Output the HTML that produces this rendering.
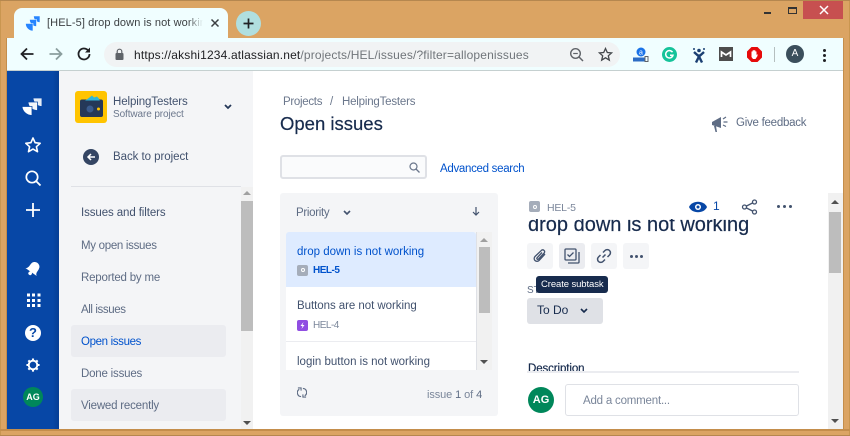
<!DOCTYPE html>
<html><head><meta charset="utf-8">
<style>
html,body{margin:0;padding:0}
body{width:850px;height:436px;overflow:hidden;position:relative;background:#DBA463;font-family:"Liberation Sans",sans-serif;color:#42526E}
div,span,svg{position:absolute}
.t{white-space:nowrap;font-size:11.5px;line-height:16px;letter-spacing:-.3px}
</style></head><body>
<div style="left:0;top:0;width:850px;height:1px;background:#B5874F"></div>
<div style="left:0;top:1px;width:1px;height:435px;background:#C99650"></div>
<div style="left:849px;top:1px;width:1px;height:435px;background:#C99650"></div>
<div style="left:0;top:435px;width:850px;height:1px;background:#B5874F"></div>
<!-- tab -->
<div style="left:14px;top:8px;width:214px;height:31px;background:#F0FEFF;border-radius:8px 8px 0 0"></div>
<svg style="left:25px;top:15px" width="16" height="17" viewBox="0 0 16 17"><g fill="#2684FF" stroke="#F0FEFF" stroke-width=".6"><path d="M8.500 1h6.500v6.500a6.500 6.500 0 0 1-6.500-6.500z"/><path d="M4.500 4.500h7v7a7 7 0 0 1-7-7z"/><path d="M.5 8.500h7.500v7.500a7.500 7.500 0 0 1-7.500-7.500z"/></g></svg>
<div class="t" style="left:47px;top:15px;width:156px;overflow:hidden;color:#3C4043;font-size:11px;letter-spacing:.1px">[HEL-5] drop down is not working</div>
<div style="left:188px;top:14px;width:15px;height:18px;background:linear-gradient(90deg,rgba(240,254,255,0),#F0FEFF)"></div>
<svg style="left:210px;top:18px" width="10" height="10" viewBox="0 0 10 10"><path d="M1.500 1.500l7 7M8.500 1.500l-7 7" stroke="#3C4043" stroke-width="1.500"/></svg>
<div style="left:236px;top:11px;width:25px;height:25px;border-radius:50%;background:#B0DFDF"></div>
<svg style="left:242px;top:17px" width="13" height="13" viewBox="0 0 13 13"><path d="M6.500 1.500v10M1.500 6.500h10" stroke="#202124" stroke-width="1.700"/></svg>
<!-- window controls -->
<div style="left:764px;top:12px;width:7px;height:2px;background:#333"></div>
<div style="left:788px;top:7px;width:7px;height:4px;border:1.500px solid #333;border-top-width:2px"></div>
<div style="left:803px;top:1px;width:40px;height:18px;background:#C75050"></div>
<svg style="left:819px;top:5px" width="10" height="10" viewBox="0 0 10 10"><path d="M1 1l8 8M9 1l-8 8" stroke="#fff" stroke-width="1.500"/></svg>
<!-- toolbar -->
<div style="left:7px;top:38px;width:836px;height:32px;background:#F0FEFF"></div>
<div style="left:7px;top:70px;width:836px;height:1px;background:#C5D0D0"></div>
<svg style="left:19px;top:46px" width="16" height="16" viewBox="0 0 16 16"><path d="M14.500 8H2.500M8 2.500L2.500 8 8 13.500" fill="none" stroke="#202124" stroke-width="1.800"/></svg>
<svg style="left:48px;top:46px" width="16" height="16" viewBox="0 0 16 16"><path d="M1.500 8h12M8 2.500L13.500 8 8 13.500" fill="none" stroke="#8A9E9E" stroke-width="1.800"/></svg>
<svg style="left:76px;top:46px" width="16" height="16" viewBox="0 0 16 16"><path d="M13.500 8A5.500 5.500 0 1 1 11.800 4" fill="none" stroke="#202124" stroke-width="1.800"/><path d="M14 1.500V6.500H9z" fill="#202124"/></svg>
<div style="left:104px;top:42px;width:516px;height:25px;border-radius:13px;background:#F1F3F4"></div>
<svg style="left:114px;top:48px" width="11" height="13" viewBox="0 0 11 13"><rect x="1.500" y="5" width="8" height="7" rx="1" fill="#5F6368"/><path d="M3.200 5V3.500a2.300 2.300 0 0 1 4.600 0V5" fill="none" stroke="#5F6368" stroke-width="1.200"/></svg>
<div class="t" style="left:134px;top:47px;font-size:12px;color:#70757A;letter-spacing:.16px"><span style="position:static;color:#202124">https://akshi1234.atlassian.net</span>/projects/HEL/issues/?filter=allopenissues</div>
<svg style="left:569px;top:47px" width="15" height="15" viewBox="0 0 15 15"><circle cx="6.500" cy="6.500" r="4.800" fill="none" stroke="#5F6368" stroke-width="1.400"/><path d="M10 10l4 4" stroke="#5F6368" stroke-width="1.500"/><path d="M4.200 6.500h4.600" stroke="#5F6368" stroke-width="1.200"/></svg>
<svg style="left:598px;top:47px" width="15" height="15" viewBox="0 0 15 15"><path d="M7.500 1.500l1.800 4 4.300.4-3.300 2.900 1 4.300-3.800-2.300-3.800 2.300 1-4.300L1.400 5.900l4.300-.4z" fill="none" stroke="#44484C" stroke-width="1.300"/></svg>
<!-- extensions -->
<svg style="left:633px;top:47px" width="16" height="16" viewBox="0 0 16 16"><circle cx="8" cy="5" r="4.500" fill="#1A73E8"/><text x="8" y="7.500" font-size="7" text-anchor="middle" fill="#fff" font-family="Liberation Sans">a</text><rect x="0" y="10.500" width="12" height="4" fill="#2B6CC4"/><rect x="12" y="9.500" width="3" height="5" fill="none" stroke="#5F6368"/></svg>
<div style="left:662px;top:47px;width:15px;height:15px;border-radius:50%;background:#15C39A"></div>
<svg style="left:662px;top:47px" width="15" height="15" viewBox="0 0 15 15"><path d="M10.500 5.200A3.700 3.700 0 1 0 11 8.200H8" fill="none" stroke="#fff" stroke-width="1.500"/></svg>
<svg style="left:691px;top:47px" width="16" height="16" viewBox="0 0 16 16"><circle cx="8" cy="3.500" r="1.800" fill="#1B3F72"/><circle cx="3" cy="2" r="1" fill="#1B3F72"/><circle cx="13" cy="2" r="1" fill="#1B3F72"/><path d="M3 5L8 9.500 13 5M5 15.500L8 9.500l3 6" fill="none" stroke="#1B3F72" stroke-width="2.400"/></svg>
<div style="left:719px;top:47px;width:14px;height:14px;background:#4D4D4D"></div>
<svg style="left:719px;top:47px" width="14" height="14" viewBox="0 0 14 14"><path d="M2.500 10V5L7 8l4.500-3v5" fill="none" stroke="#fff" stroke-width="1.700"/></svg>
<svg style="left:747px;top:47px" width="15" height="15" viewBox="0 0 15 15"><path d="M4.500 0h6L15 4.500v6L10.500 15h-6L0 10.500v-6z" fill="#E60B0B"/><path d="M4.500 7V4.500h1V3.500h1V3h1v.5h1v1h1V8l1-1v2l-2 3H6L4.500 10z" fill="#fff"/></svg>
<div style="left:774px;top:47px;width:1px;height:15px;background:#B5BFBF"></div>
<div style="left:786px;top:45px;width:18px;height:18px;border-radius:50%;background:#3B4F5C"></div>
<div class="t" style="left:786px;top:46px;width:18px;text-align:center;color:#fff;font-size:10px;letter-spacing:0">A</div>
<div style="left:822.500px;top:49px;width:3px;height:3px;border-radius:50%;background:#202124"></div>
<div style="left:822.500px;top:54px;width:3px;height:3px;border-radius:50%;background:#202124"></div>
<div style="left:822.500px;top:59px;width:3px;height:3px;border-radius:50%;background:#202124"></div>
<!-- page -->
<div style="left:7px;top:71px;width:836px;height:358px;background:#fff"></div>
<div style="left:0;top:429px;width:850px;height:2px;background:#C48E4C"></div>
<div style="left:843px;top:38px;width:1px;height:392px;background:#C48E4C"></div>
<div style="left:6px;top:38px;width:1px;height:392px;background:#C48E4C"></div>
<div style="left:7px;top:71px;width:52px;height:358px;background:linear-gradient(90deg,#0747A6 88%,#063E94)"></div>
<div style="left:59px;top:71px;width:194px;height:358px;background:#F4F5F7"></div>
<!-- nav icons -->
<svg style="left:21px;top:97px" width="22" height="20" viewBox="0 0 22 20"><g fill="#fff" stroke="#0747A6" stroke-width=".8"><path d="M12 1h9v8.500a9 9 0 0 1-9-8.500z" opacity=".9"/><path d="M7 5h9.500v8.500a9 9 0 0 1-9.500-8.500z" opacity=".95"/><path d="M1 9.500h10v9a10 10 0 0 1-10-9z"/></g></svg>
<svg style="left:24px;top:136px" width="18" height="18" viewBox="0 0 18 18"><path d="M9 2l2.100 4.700 5.100.6-3.800 3.400 1.100 5-4.500-2.600-4.500 2.600 1.100-5L1.800 7.300l5.100-.6z" fill="none" stroke="#fff" stroke-width="1.600" stroke-linejoin="round"/></svg>
<svg style="left:24px;top:169px" width="18" height="18" viewBox="0 0 18 18"><circle cx="8" cy="8" r="5.700" fill="none" stroke="#fff" stroke-width="1.700"/><path d="M12 12l4.500 4.500" stroke="#fff" stroke-width="1.800"/></svg>
<svg style="left:25px;top:202px" width="16" height="16" viewBox="0 0 16 16"><path d="M8 1v14M1 8h14" stroke="#fff" stroke-width="1.800"/></svg>
<svg style="left:25px;top:260px" width="17" height="17" viewBox="0 0 16 16"><g transform="rotate(35 8 8)"><path d="M1.500 12c2-1 2-3 2-6a4.500 4.500 0 0 1 9 0c0 3 0 5 2 6z" fill="#fff"/><circle cx="8" cy="13.500" r="1.700" fill="#fff"/></g></svg>
<div style="left:27px;top:293px;width:13.500px;height:13.500px;background:repeating-linear-gradient(90deg,#fff 0 3px,transparent 3px 5.250px);-webkit-mask:repeating-linear-gradient(0deg,#000 0 3px,transparent 3px 5.250px);mask:repeating-linear-gradient(0deg,#000 0 3px,transparent 3px 5.250px)"></div>
<div style="left:25px;top:325px;width:16px;height:16px;border-radius:50%;background:#fff"></div>
<div class="t" style="left:25px;top:325px;width:16px;text-align:center;color:#0747A6;font-size:13px;line-height:16px;font-weight:bold;letter-spacing:0">?</div>
<svg style="left:26px;top:358px" width="14" height="14" viewBox="0 0 16 16"><circle cx="8" cy="8" r="4.900" fill="none" stroke="#fff" stroke-width="2.200"/><path d="M8 .5v3M8 12.500v3M.5 8h3M12.500 8h3M2.700 2.700l2 2M11.300 11.300l2 2M13.300 2.700l-2 2M4.700 11.300l-2 2" stroke="#fff" stroke-width="2.400"/></svg>
<div style="left:23px;top:387px;width:20px;height:20px;border-radius:50%;background:#00875A"></div>
<div class="t" style="left:23px;top:389px;width:20px;text-align:center;color:#fff;font-size:9px;font-weight:bold;letter-spacing:0">AG</div>
<!-- project -->
<div style="left:75px;top:91px;width:32px;height:32px;border-radius:3px;background:#FFC400"></div>
<svg style="left:79px;top:95px" width="25" height="24" viewBox="0 0 25 24"><path d="M6 6L13 .5 15 2.500 18 1.500 22 6z" fill="#2FB6D8"/><rect x="1" y="4.500" width="23" height="17.500" rx="2" fill="#253858"/><path d="M6 5.500L13 1.500 15 3 18 2.500 21 5.500z" fill="#2FB6D8"/><circle cx="11" cy="14" r="3.500" fill="#3A5A8C"/><circle cx="19.500" cy="14" r="1.500" fill="#FFC400"/></svg>
<div class="t" style="left:113px;top:94px;letter-spacing:-.1px;color:#42526E">HelpingTesters</div>
<div class="t" style="left:113px;top:107px;font-size:10px;letter-spacing:-.1px;color:#6B778C">Software project</div>
<svg style="left:223px;top:103px" width="10" height="8" viewBox="0 0 10 8"><path d="M2 2l3 3 3-3" fill="none" stroke="#253858" stroke-width="1.800"/></svg>
<div style="left:83px;top:149px;width:16px;height:16px;border-radius:50%;background:#344563"></div>
<svg style="left:83px;top:149px" width="16" height="16" viewBox="0 0 16 16"><path d="M12 8H5M8 5L5 8l3 3" fill="none" stroke="#fff" stroke-width="1.500"/></svg>
<div class="t" style="left:113px;top:149px;letter-spacing:-.05px;color:#42526E">Back to project</div>
<div style="left:71px;top:186px;width:170px;height:1px;background:#DFE1E6"></div>
<div style="left:241px;top:187px;width:12px;height:242px;background:#F1F1F1"></div>
<svg style="left:243px;top:191px" width="8" height="5"><path d="M4 0l4 4H0z" fill="#A0A0A0"/></svg>
<div style="left:241px;top:201px;width:12px;height:130px;background:#BDBDBD"></div>
<svg style="left:243px;top:421px" width="8" height="5"><path d="M0 0h8L4 4z" fill="#505050"/></svg>
<div class="t" style="left:81px;top:205px;letter-spacing:-.1px;color:#42526E">Issues and filters</div>
<div class="t" style="left:81px;top:238px;color:#5E6C84">My open issues</div>
<div class="t" style="left:81px;top:270px;letter-spacing:-.2px;color:#5E6C84">Reported by me</div>
<div class="t" style="left:81px;top:302px;letter-spacing:-.4px;color:#5E6C84">All issues</div>
<div style="left:71px;top:325px;width:155px;height:32px;border-radius:3px;background:#EBECF0"></div>
<div class="t" style="left:81px;top:334px;color:#0052CC;letter-spacing:-.35px">Open issues</div>
<div class="t" style="left:81px;top:366px;letter-spacing:-.2px;color:#5E6C84">Done issues</div>
<div style="left:71px;top:389px;width:155px;height:32px;border-radius:3px;background:#EBECF0"></div>
<div class="t" style="left:81px;top:398px;letter-spacing:-.2px;color:#5E6C84">Viewed recently</div>
<!-- header -->
<div class="t" style="left:283px;top:94px;color:#6B778C">Projects</div>
<div class="t" style="left:330px;top:94px;color:#6B778C">/</div>
<div class="t" style="left:342px;top:94px;letter-spacing:-.2px;color:#6B778C">HelpingTesters</div>
<div class="t" style="left:280px;top:111px;font-size:18.500px;line-height:26px;letter-spacing:0;color:#172B4D;-webkit-text-stroke:.2px #172B4D">Open issues</div>
<svg style="left:711px;top:113px" width="18" height="20" viewBox="0 0 18 20"><path d="M1 9l9-5v11L1 12z" fill="#5E6C84"/><path d="M3 13l1.500 6h1.500L5 13z" fill="#5E6C84"/><path d="M12 6l3-2M12.500 9h4M12 12l3 1.500" stroke="#5E6C84" stroke-width="1.200"/></svg>
<div class="t" style="left:736px;top:115px;letter-spacing:-.25px;color:#5E6C84">Give feedback</div>
<div style="left:280px;top:155px;width:143px;height:20px;border:2px solid #DFE1E6;border-radius:3px;background:#FAFBFC"></div>
<svg style="left:409px;top:162px" width="11" height="11" viewBox="0 0 11 11"><circle cx="4.500" cy="4.500" r="3.500" fill="none" stroke="#6B778C" stroke-width="1.200"/><path d="M7 7l3.500 3.500" stroke="#6B778C" stroke-width="1.300"/></svg>
<div class="t" style="left:440px;top:161px;color:#0052CC">Advanced search</div>
<!-- list -->
<div style="left:280px;top:193px;width:218px;height:223px;border-radius:3px;background:#F4F5F7"></div>
<div class="t" style="left:296px;top:205px;color:#5E6C84">Priority</div>
<svg style="left:342px;top:209px" width="10" height="8" viewBox="0 0 10 8"><path d="M2 2l3 3 3-3" fill="none" stroke="#42526E" stroke-width="1.600"/></svg>
<svg style="left:471px;top:206px" width="10" height="11" viewBox="0 0 10 11"><path d="M5 1v8M2 6l3 3 3-3" fill="none" stroke="#42526E" stroke-width="1.200"/></svg>
<div style="left:286px;top:232px;width:190px;height:55px;border-radius:3px 3px 0 0;background:#DEEBFF"></div>
<div class="t" style="left:297px;top:244px;letter-spacing:0;color:#0052CC">drop down is not working</div>
<div style="left:297px;top:265px;width:11px;height:10.500px;border-radius:2px;background:#A5ADBA"></div>
<div style="left:300.500px;top:268px;width:4px;height:4px;border-radius:50%;border:1px solid #fff;box-sizing:border-box"></div>
<div class="t" style="left:313px;top:263px;font-size:10px;letter-spacing:-.5px;font-weight:bold;color:#0052CC">HEL-5</div>
<div style="left:286px;top:287px;width:190px;height:54px;background:#fff"></div>
<div class="t" style="left:297px;top:298px;letter-spacing:-.05px;color:#42526E">Buttons are not working</div>
<div style="left:297px;top:320px;width:11px;height:10.500px;border-radius:2px;background:#904EE2"></div>
<svg style="left:297px;top:320px" width="11" height="11" viewBox="0 0 11 11"><path d="M6.500 2L3.500 6h2L4.500 9l3-4h-2z" fill="#fff"/></svg>
<div class="t" style="left:313px;top:318px;font-size:10px;letter-spacing:-.5px;color:#7A869A">HEL-4</div>
<div style="left:286px;top:341px;width:190px;height:1px;background:#EBECF0"></div>
<div style="left:286px;top:342px;width:190px;height:28px;background:#fff;overflow:hidden"><div class="t" style="left:11px;top:12px;letter-spacing:0;color:#42526E">login button is not working</div></div>
<div style="left:476px;top:232px;width:1px;height:138px;background:#DFE1E6"></div>
<div style="left:477px;top:232px;width:15px;height:138px;background:#F1F1F1"></div>
<svg style="left:480px;top:238px" width="8" height="5"><path d="M4 0l4 4H0z" fill="#A0A0A0"/></svg>
<div style="left:479px;top:247px;width:11px;height:66px;background:#BDBDBD"></div>
<svg style="left:480px;top:360px" width="8" height="5"><path d="M0 0h8L4 4z" fill="#505050"/></svg>
<svg style="left:297px;top:387px" width="10" height="11" viewBox="0 0 11 12"><path d="M4.500 10.500A4.300 4.300 0 0 1 2.500 2.500M6.500 1.500a4.300 4.300 0 0 1 2 8" fill="none" stroke="#5E6C84" stroke-width="1.300"/><path d="M1 1h3.500v3M10 11H6.500V8" fill="none" stroke="#5E6C84" stroke-width="1.200"/></svg>
<div class="t" style="left:427px;top:387px;font-size:11px;letter-spacing:-.1px;color:#7A869A">issue <span style="position:static;color:#5E6C84">1</span> of <span style="position:static;color:#5E6C84">4</span></div>
<!-- detail -->
<div style="left:529px;top:201px;width:11px;height:11px;border-radius:2px;background:#A5ADBA"></div>
<div style="left:532.500px;top:204.500px;width:4px;height:4px;border-radius:50%;border:1px solid #fff;box-sizing:border-box"></div>
<div class="t" style="left:547px;top:200px;font-size:10.500px;letter-spacing:-.2px;color:#7A869A">HEL-5</div>
<svg style="left:689px;top:200px" width="18" height="14" viewBox="0 0 18 14"><path d="M0 7c3-7 15-7 18 0-3 7-15 7-18 0z" fill="#0747A6"/><circle cx="9" cy="7" r="3" fill="#fff"/><circle cx="9" cy="7" r="1.500" fill="#0747A6"/></svg>
<div class="t" style="left:713px;top:198px;color:#0747A6;font-size:12px">1</div>
<svg style="left:741px;top:199px" width="17" height="16" viewBox="0 0 17 16"><path d="M13.500 3L3.500 8l10 5" fill="none" stroke="#42526E" stroke-width="1.300"/><circle cx="13.500" cy="3" r="2" fill="#fff" stroke="#42526E" stroke-width="1.300"/><circle cx="3.500" cy="8" r="2" fill="#fff" stroke="#42526E" stroke-width="1.300"/><circle cx="13.500" cy="13" r="2" fill="#fff" stroke="#42526E" stroke-width="1.300"/></svg>
<div style="left:777px;top:205px;width:3px;height:3px;border-radius:50%;background:#42526E"></div>
<div style="left:783px;top:205px;width:3px;height:3px;border-radius:50%;background:#42526E"></div>
<div style="left:789px;top:205px;width:3px;height:3px;border-radius:50%;background:#42526E"></div>
<div style="left:527px;top:219px;width:290px;height:19px;overflow:hidden"><div class="t" style="left:1px;top:-7px;font-size:20px;line-height:26px;letter-spacing:0;color:#172B4D;-webkit-text-stroke:.2px #172B4D">drop down is not working</div></div>
<div style="left:527px;top:243px;width:26px;height:26px;border-radius:3px;background:#F4F5F7"></div>
<div style="left:559px;top:243px;width:26px;height:26px;border-radius:3px;background:#EBECF0"></div>
<div style="left:591px;top:243px;width:26px;height:26px;border-radius:3px;background:#F4F5F7"></div>
<div style="left:623px;top:243px;width:26px;height:26px;border-radius:3px;background:#F4F5F7"></div>
<svg style="left:532px;top:248px" width="16" height="16" viewBox="0 0 16 16"><path d="M13 6l-6 6.500a2.800 2.800 0 0 1-4-4L9.500 2.300a1.900 1.900 0 0 1 2.800 2.500L6.500 11a.9.900 0 0 1-1.400-1.200L10 4.500" fill="none" stroke="#42526E" stroke-width="1.300"/></svg>
<svg style="left:564px;top:248px" width="17" height="17" viewBox="0 0 17 17"><rect x="1" y="1" width="11" height="11" rx="1" fill="none" stroke="#42526E" stroke-width="1.300"/><path d="M3.500 6.500l2 2 4-4" fill="none" stroke="#42526E" stroke-width="1.300"/><path d="M15 4v10a1 1 0 0 1-1 1H4" fill="none" stroke="#42526E" stroke-width="1.300"/></svg>
<svg style="left:596px;top:248px" width="16" height="16" viewBox="0 0 16 16"><path d="M6.500 9.500L9.500 6.500M7 4.500l2-2a2.800 2.800 0 0 1 4.500 4.500l-2 2M9 11.500l-2 2a2.800 2.800 0 0 1-4.500-4.500l2-2" fill="none" stroke="#42526E" stroke-width="1.500"/></svg>
<div style="left:630px;top:255px;width:3px;height:3px;border-radius:50%;background:#42526E"></div>
<div style="left:635px;top:255px;width:3px;height:3px;border-radius:50%;background:#42526E"></div>
<div style="left:640px;top:255px;width:3px;height:3px;border-radius:50%;background:#42526E"></div>
<div class="t" style="left:527px;top:283px;font-size:10px;letter-spacing:0;color:#5E6C84">STATUS</div>
<div style="left:536px;top:276px;width:72px;height:16.500px;border-radius:3px;background:#172B4D"></div>
<div class="t" style="left:541px;top:277px;font-size:9.500px;line-height:15px;letter-spacing:-.1px;color:#fff">Create subtask</div>
<div style="left:527px;top:298px;width:76px;height:26px;border-radius:3px;background:#DFE1E6"></div>
<div class="t" style="left:537px;top:302px;font-size:12px;letter-spacing:0;color:#172B4D">To Do</div>
<svg style="left:579px;top:307px" width="10" height="8" viewBox="0 0 10 8"><path d="M2 2l3 3 3-3" fill="none" stroke="#172B4D" stroke-width="1.600"/></svg>
<div style="left:527px;top:360px;width:272px;height:11px;overflow:hidden"><div class="t" style="left:1px;top:1px;color:#172B4D;font-size:11.500px;letter-spacing:-.1px;-webkit-text-stroke:.2px #172B4D">Description</div></div>
<div style="left:527px;top:371px;width:272px;height:2px;background:#EBECF0"></div>
<div style="left:528px;top:387px;width:26px;height:26px;border-radius:50%;background:#00875A"></div>
<div class="t" style="left:528px;top:392px;width:26px;text-align:center;color:#fff;font-size:11px;font-weight:bold;letter-spacing:0">AG</div>
<div style="left:565px;top:384px;width:232px;height:30px;border:1px solid #DFE1E6;border-radius:3px;background:#fff"></div>
<div class="t" style="left:583px;top:393px;letter-spacing:-.2px;color:#7A869A">Add a comment...</div>
<!-- right scrollbar -->
<div style="left:828px;top:193px;width:15px;height:236px;background:#F1F1F1"></div>
<svg style="left:831px;top:200px" width="8" height="5"><path d="M4 0l4 4H0z" fill="#505050"/></svg>
<div style="left:829px;top:212px;width:12px;height:61px;background:#BDBDBD"></div>
<svg style="left:831px;top:419px" width="8" height="5"><path d="M0 0h8L4 4z" fill="#505050"/></svg>
</body></html>
